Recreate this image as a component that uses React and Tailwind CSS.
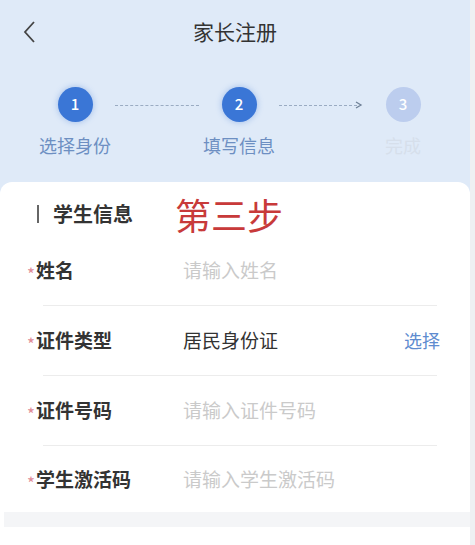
import React from "react";

const font = { fontFamily: '"Noto Sans CJK SC", "Noto Sans", sans-serif' };

function Step({ n, label, active }) {
  return (
    <div className="flex w-[80px] flex-col items-center">
      <div
        className={
          "flex h-[35px] w-[35px] items-center justify-center rounded-full text-[15px] font-medium text-white " +
          (active ? "bg-[#3a76d6] shadow-[0_0_6px_rgba(58,118,214,0.4)]" : "bg-[#bccdee]")
        }
      >
        {n}
      </div>
      <div
        className={
          "mt-[12px] whitespace-nowrap text-[18px] leading-[22px] " +
          (active ? "text-[#6d8fc2]" : "text-[#d6dfeb]")
        }
      >
        {label}
      </div>
    </div>
  );
}

function Dash({ arrow }) {
  return (
    <div className="mt-[17px] flex h-[2px] w-[84px] items-center">
      <div className="h-0 flex-1 border-t-[1.5px] border-dashed border-[#9aabc2]" />
      {arrow && (
        <svg width="8" height="8" viewBox="0 0 8 8" className="-ml-[2px]">
          <path d="M1 1 L6 4 L1 7" fill="none" stroke="#6f8197" strokeWidth="1.3" />
        </svg>
      )}
    </div>
  );
}

function Row({ label, value, placeholder, action, divider = true, h = "h-[69px]" }) {
  return (
    <div className="flex shrink-0 flex-col">
      <div className={"flex items-center pl-[23px] pr-[30px] " + h}>
        <div className="flex w-[156px] items-center">
          <span className="mr-[1px] translate-y-[3px] text-[17px] leading-none text-[#e08c97]">*</span>
          <span className="whitespace-nowrap text-[19px] font-bold text-[#333]">{label}</span>
        </div>
        <div className="flex-1">
          {value ? (
            <span className="text-[19px] text-[#333]">{value}</span>
          ) : (
            <span className="text-[19px] text-[#cacaca]">{placeholder}</span>
          )}
        </div>
        {action && <span className="text-[18px] text-[#5e8bcf]">{action}</span>}
      </div>
      {divider && <div className="ml-[39px] mr-[33px] h-px bg-[#ececec]" />}
    </div>
  );
}

export default function App() {
  return (
    <div className="flex h-[545px] w-[475px] overflow-hidden bg-[#eef0f3]" style={font}>
      <div className="flex w-[470px] shrink-0 flex-col bg-[#dfeaf8]">
        <div className="relative flex h-[64px] shrink-0 items-center justify-center">
          <svg width="14" height="24" viewBox="0 0 14 24" className="absolute left-[22px] top-[20px]">
            <path d="M12 2 L3 12 L12 22" fill="none" stroke="#444" strokeWidth="1.8" />
          </svg>
          <span className="text-[21px] text-[#333]">家长注册</span>
        </div>
        <div className="mt-[23px] flex shrink-0 items-start pl-[35px]">
          <Step n="1" label="选择身份" active />
          <Dash />
          <Step n="2" label="填写信息" active />
          <Dash arrow />
          <Step n="3" label="完成" />
        </div>
        <div className="mt-[26px] flex shrink-0 flex-col rounded-t-[12px] bg-white pl-[4px]">
          <div className="flex h-[54px] shrink-0 items-center pt-[10px]">
            <div className="ml-[33px] h-[18px] w-[2px] bg-[#666]" />
            <span className="ml-[14px] text-[20px] font-bold text-[#333]">学生信息</span>
            <span className="ml-[42px] text-[36px] leading-none text-[#c83a3a]">第三步</span>
          </div>
          <Row label="姓名" placeholder="请输入姓名" />
          <Row label="证件类型" value="居民身份证" action="选择" />
          <Row label="证件号码" placeholder="请输入证件号码" />
          <Row label="学生激活码" placeholder="请输入学生激活码" divider={false} h="h-[66px]" />
          <div className="h-[15px] shrink-0 bg-[#f4f5f7]" />
          <div className="h-[40px] shrink-0 bg-white" />
        </div>
      </div>
    </div>
  );
}
